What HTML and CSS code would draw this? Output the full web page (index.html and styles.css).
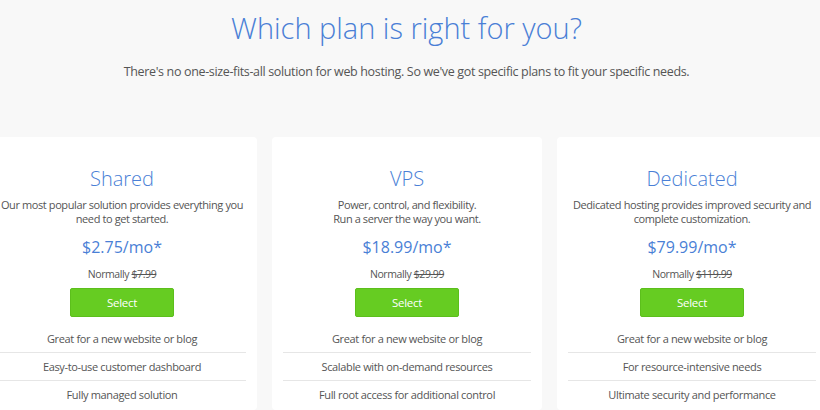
FILE: index.html
```html
<!DOCTYPE html>
<html>
<head>
<meta charset="utf-8">
<link rel="stylesheet" href="styles.css">
</head>
<body>
<header class="intro">
  <h1 class="intro-title">Which plan is right for you?</h1>
  <p class="intro-text">There's no one-size-fits-all solution for web hosting. So we've got specific plans to fit your specific needs.</p>
</header>
<section class="plans">
  <div class="plan">
    <h2 class="plan-name">Shared</h2>
    <p class="plan-desc">Our most popular solution provides everything you need to get started.</p>
    <div class="plan-price">$2.75/mo*</div>
    <div class="plan-normal">Normally <s>$7.99</s></div>
    <a class="plan-btn">Select</a>
    <ul class="plan-features">
      <li>Great for a new website or blog</li>
      <li>Easy-to-use customer dashboard</li>
      <li>Fully managed solution</li>
    </ul>
  </div>
  <div class="plan">
    <h2 class="plan-name">VPS</h2>
    <p class="plan-desc">Power, control, and flexibility.<br>Run a server the way you want.</p>
    <div class="plan-price">$18.99/mo*</div>
    <div class="plan-normal">Normally <s>$29.99</s></div>
    <a class="plan-btn">Select</a>
    <ul class="plan-features">
      <li>Great for a new website or blog</li>
      <li>Scalable with on-demand resources</li>
      <li>Full root access for additional control</li>
    </ul>
  </div>
  <div class="plan">
    <h2 class="plan-name">Dedicated</h2>
    <p class="plan-desc">Dedicated hosting provides improved security and complete customization.</p>
    <div class="plan-price">$79.99/mo*</div>
    <div class="plan-normal">Normally <s>$119.99</s></div>
    <a class="plan-btn">Select</a>
    <ul class="plan-features">
      <li>Great for a new website or blog</li>
      <li>For resource-intensive needs</li>
      <li>Ultimate security and performance</li>
    </ul>
  </div>
</section>
</body>
</html>
```
FILE: styles.css
```css
html, body {
  margin: 0;
  padding: 0;
}
body {
  background: #f8f8f8;
  font-family: "Open Sans", "Liberation Sans", sans-serif;
  color: #555;
  width: 820px;
  height: 410px;
  overflow: hidden;
}
.intro {
  text-align: center;
  padding-top: 8px;
  margin-left: -7px;
}
.intro-title {
  margin: 0;
  font-size: 29px;
  line-height: 40px;
  font-weight: 300;
  color: #4a7fd6;
}
.intro-text {
  margin: 15px 0 0;
  font-size: 12.5px;
  letter-spacing: -0.35px;
  line-height: 18px;
}
.plans {
  display: flex;
  gap: 15px;
  margin-left: -13px;
  margin-top: 56px;
}
.plan {
  flex: none;
  width: 248px;
  padding: 28px 11px 0;
  background: #fff;
  border-radius: 4px;
  text-align: center;
  height: 245px;
  overflow: hidden;
}
.plan-name {
  margin: 0;
  font-size: 20px;
  line-height: 28px;
  font-weight: 300;
  color: #4a7fd6;
}
.plan-desc {
  margin: 5px 0 0;
  font-size: 11px;
  letter-spacing: -0.4px;
  line-height: 13.5px;
}
.plan-price {
  margin-top: 11px;
  font-size: 16px;
  line-height: 22px;
  color: #4a7fd6;
}
.plan-normal {
  margin-top: 8px;
  font-size: 10.5px;
  letter-spacing: -0.4px;
  line-height: 16px;
}
.plan-btn {
  display: block;
  width: 104px;
  height: 29px;
  box-sizing: border-box;
  margin: 6px auto 0;
  background: #66cc22;
  border: 1px solid #5cbf1c;
  border-radius: 2px;
  color: #fff;
  font-size: 11.5px;
  letter-spacing: -0.3px;
  line-height: 27px;
}
.plan-features {
  list-style: none;
  margin: 8px 0 0;
  padding: 0;
}
.plan-features li {
  font-size: 11px;
  letter-spacing: -0.35px;
  line-height: 27px;
  border-top: 1px solid #e6e6e6;
}
.plan-features li:first-child {
  border-top: none;
}
```
